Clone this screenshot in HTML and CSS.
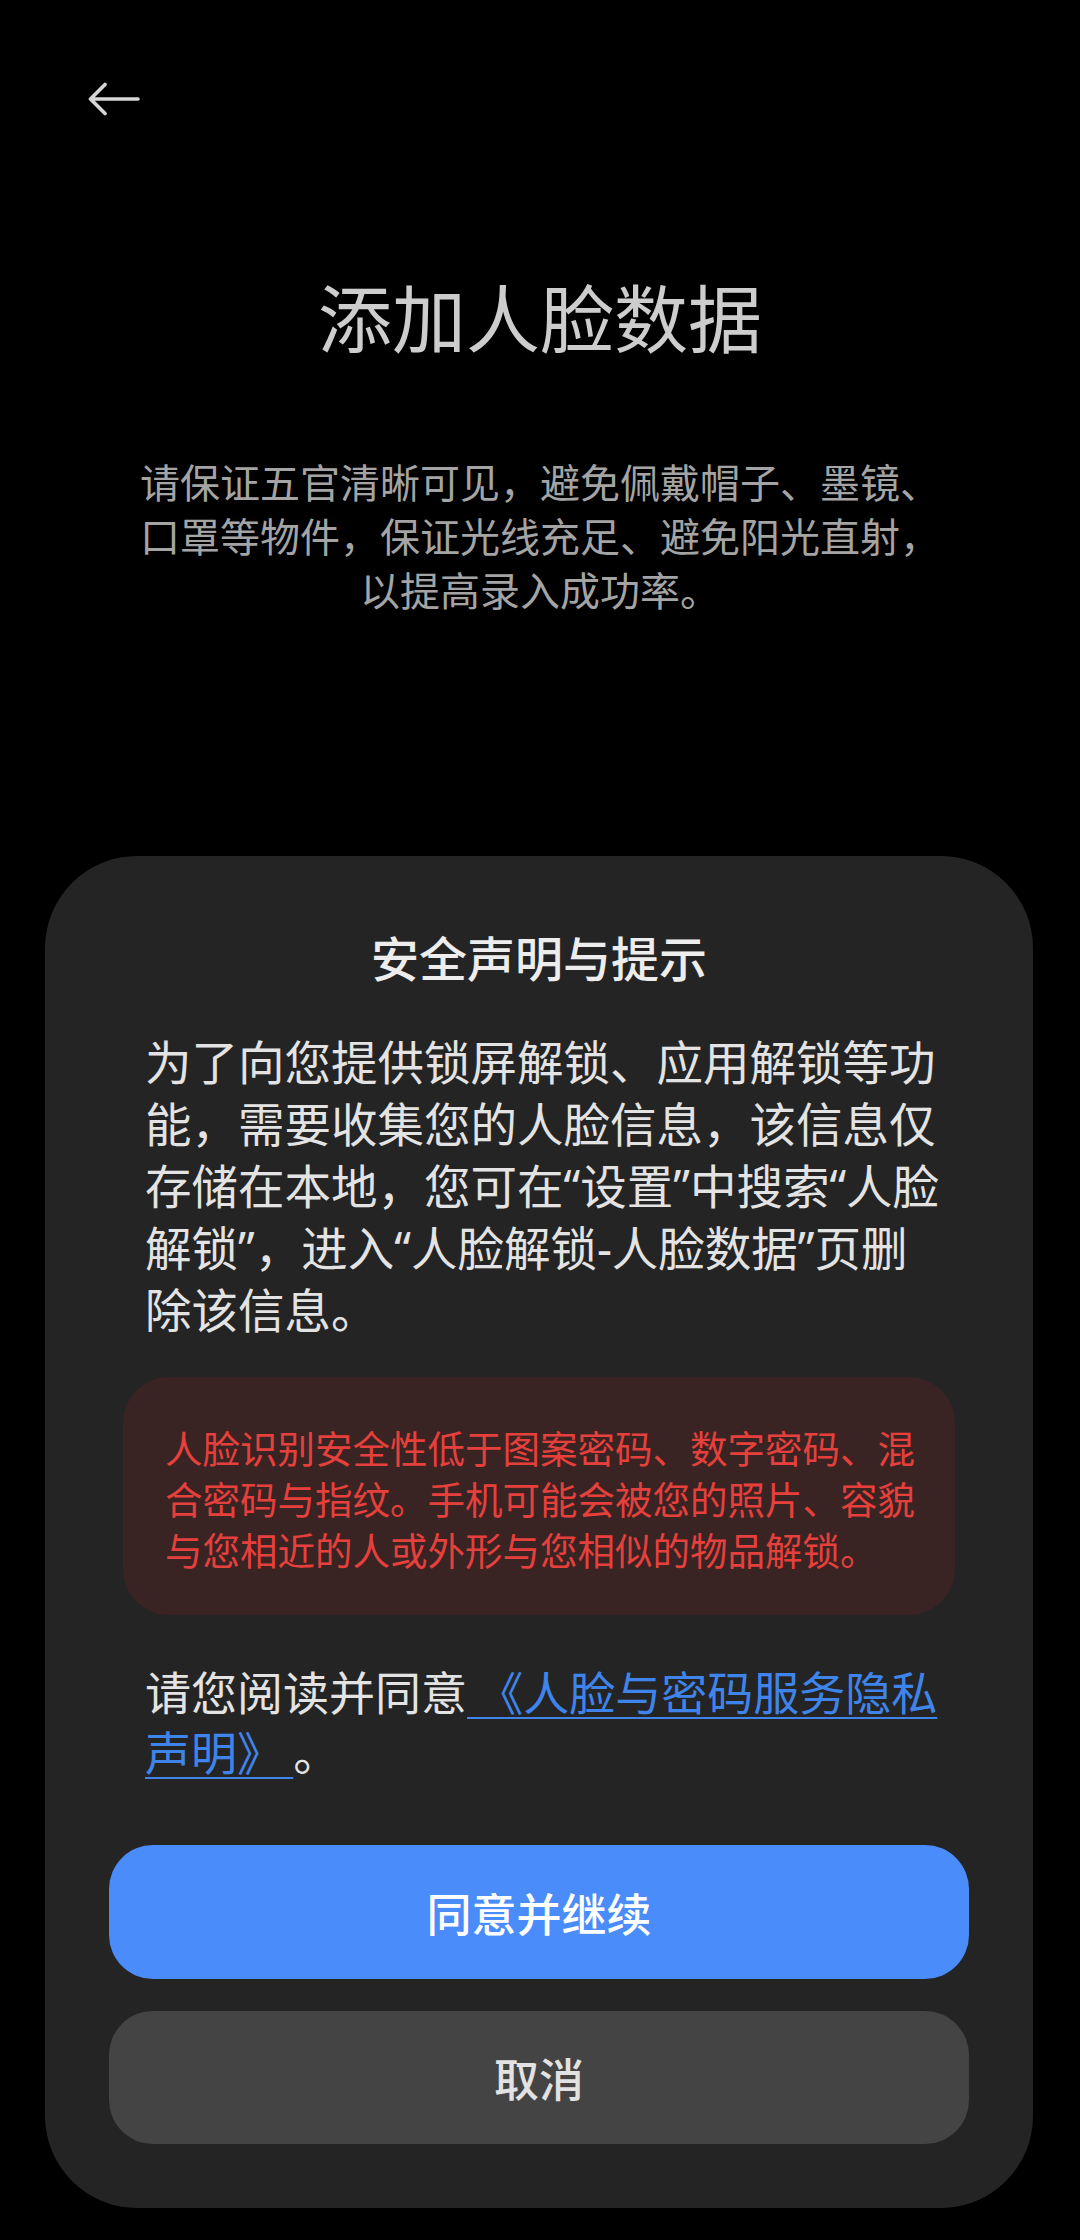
FILE: index.html
```html
<!DOCTYPE html>
<html lang="zh-CN">
<head>
<meta charset="utf-8">
<title>添加人脸数据</title>
<link rel="stylesheet" href="styles.css">
</head>
<body>
<div class="page">
  <header class="topbar">
    <svg class="back" width="52" height="34" viewBox="0 0 52 34" aria-label="返回">
      <path d="M50 17 H3 M17 2.5 L2.5 17 L17 31.5" fill="none" stroke="#d6d6d6" stroke-width="3.6" stroke-linecap="round" stroke-linejoin="round"/>
    </svg>
  </header>

  <h1 class="title">添加人脸数据</h1>
  <p class="desc">请保证五官清晰可见，避免佩戴帽子、墨镜、<br>口罩等物件，保证光线充足、避免阳光直射，<br>以提高录入成功率。</p>

  <section class="sheet">
    <h2 class="sheet-title">安全声明与提示</h2>
    <p class="sheet-body">为了向您提供锁屏解锁、应用解锁等功<br>能，需要收集您的人脸信息，该信息仅<br>存储在本地，您可在“设置”中搜索“人脸<br>解锁”，进入“人脸解锁-人脸数据”页删<br>除该信息。</p>
    <div class="warning">人脸识别安全性低于图案密码、数字密码、混<br>合密码与指纹。手机可能会被您的照片、容貌<br>与您相近的人或外形与您相似的物品解锁。</div>
    <p class="agree">请您阅读并同意<a class="link" href="#"> 《人脸与密码服务隐私<br>声明》 </a>。</p>
    <div class="actions">
      <button class="btn btn-primary" type="button">同意并继续</button>
      <button class="btn btn-secondary" type="button">取消</button>
    </div>
  </section>
</div>
</body>
</html>
```

FILE: styles.css
```css
html, body {
  margin: 0;
  padding: 0;
  background: #000;
}

body {
  width: 1080px;
  height: 2240px;
  overflow: hidden;
  font-family: "Noto Sans CJK SC", "Noto Sans", sans-serif;
}

.page {
  display: flex;
  flex-direction: column;
}

.topbar {
  padding: 82px 0 0 88px;
  height: 34px;
}

.back {
  display: block;
}

.title {
  margin: 154px 0 0;
  font-size: 74px;
  line-height: 90px;
  font-weight: 400;
  color: #cdcdcd;
  text-align: center;
}

.desc {
  margin: 94px 0 0;
  font-size: 40px;
  line-height: 54px;
  color: #a4a4a4;
  text-align: center;
  white-space: nowrap;
}

.sheet {
  margin: 240px 0 0 45px;
  width: 988px;
  box-sizing: border-box;
  padding: 68px 64px 64px;
  background: #242424;
  border-radius: 92px;
  display: flex;
  flex-direction: column;
}

.sheet-title {
  margin: 0;
  font-size: 48px;
  line-height: 64px;
  font-weight: 500;
  color: #ededed;
  text-align: center;
}

.sheet-body {
  margin: 43px 0 0;
  padding: 0 36px;
  font-family: "Noto Sans", "Noto Sans CJK SC", sans-serif;
  font-size: 46.5px;
  line-height: 62px;
  color: #e3e3e3;
  white-space: nowrap;
}

.warning {
  margin: 36px 14px 0;
  padding: 44px 42px 41px;
  background: #3a2323;
  border-radius: 46px;
  font-size: 37.5px;
  line-height: 51px;
  color: #e5403c;
  white-space: nowrap;
}

.agree {
  margin: 45px 0 0;
  padding: 0 36px;
  font-size: 46px;
  line-height: 60px;
  color: #e3e3e3;
  white-space: nowrap;
}

.link {
  color: #3f84ea;
  text-decoration: underline;
  text-decoration-thickness: 2px;
  text-underline-offset: 7px;
}

.actions {
  margin-top: 65px;
  display: flex;
  flex-direction: column;
  gap: 32px;
}

.btn {
  display: block;
  width: 100%;
  border: none;
  border-radius: 44px;
  font-family: "Noto Sans CJK SC", "Noto Sans", sans-serif;
  font-size: 45px;
  font-weight: 500;
  margin: 0;
  padding: 0;
}

.btn-primary {
  height: 134px;
  background: #4a8cf9;
  color: #ffffff;
}

.btn-secondary {
  height: 133px;
  background: #444444;
  color: #e2e2e2;
}
```
